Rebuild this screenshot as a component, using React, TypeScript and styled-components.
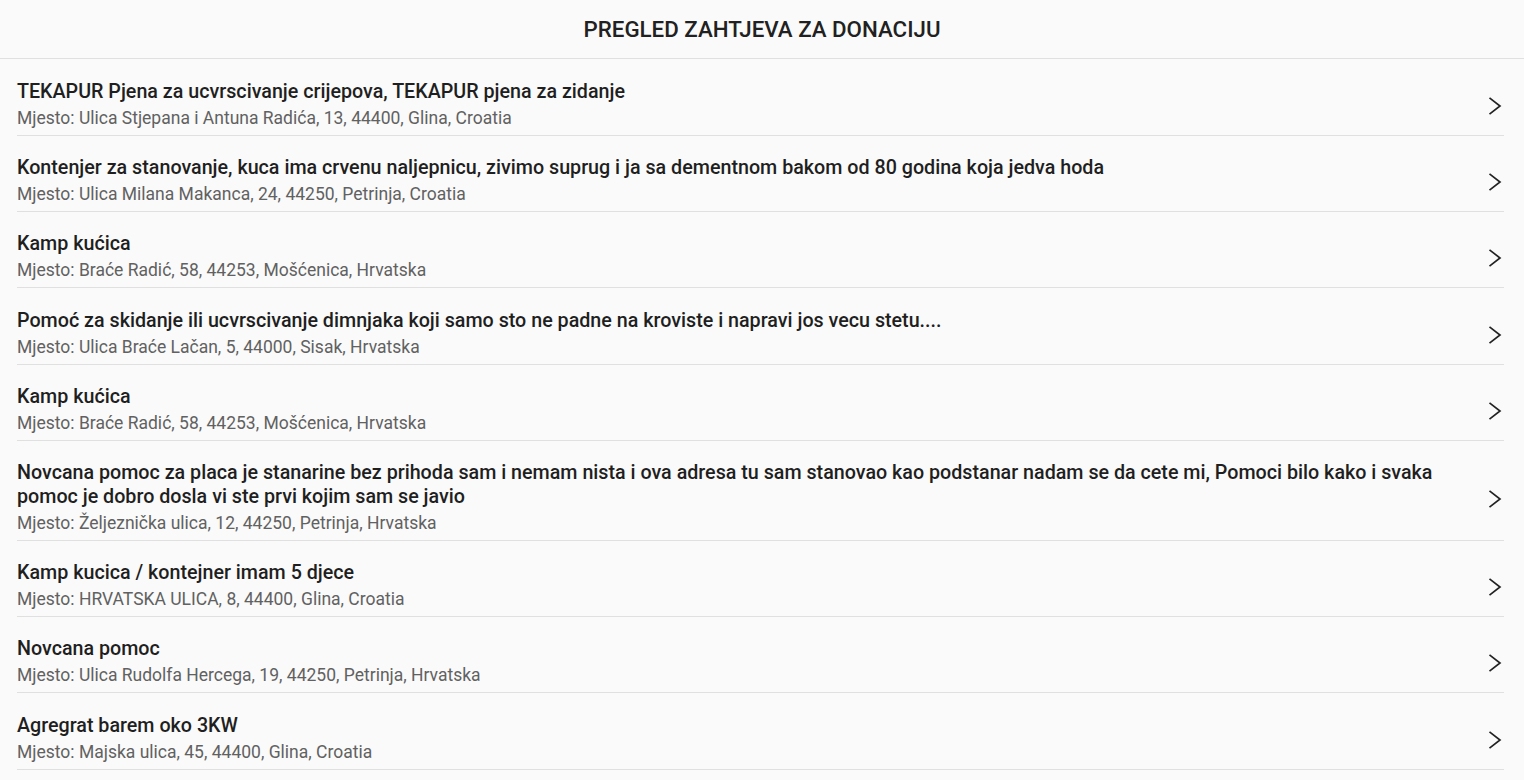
import React from "react";
import styled, { createGlobalStyle } from "styled-components";

const Global = createGlobalStyle`
  html, body { margin: 0; padding: 0; background: #fafafa; }
  body { font-family: Roboto, "Noto Sans", sans-serif; color: #212121; }
`;

const Page = styled.div`
  width: 1524px;
  min-height: 780px;
  background: #fafafa;
`;

const Header = styled.header`
  height: 58px;
  border-bottom: 1px solid #e0e0e0;
  display: flex;
  align-items: center;
  justify-content: center;
`;

const HeaderTitle = styled.h1`
  margin: 0;
  font-size: 22.3px;
  font-weight: 500;
  color: #212121;
  letter-spacing: 0;
`;

const List = styled.ul`
  list-style: none;
  margin: 0;
  padding: 0 20px 0 17px;
`;

const Row = styled.li`
  display: flex;
  align-items: center;
  border-bottom: 1px solid #e0e0e0;
  padding: 21px 0 7px;
  margin-top: -0.8px;
  &:first-child { margin-top: 0; }
  cursor: pointer;
`;

const Texts = styled.div`
  flex: 1;
  min-width: 0;
  padding-right: 40px;
`;

const Title = styled.div`
  font-size: 19.7px;
  line-height: 24px;
  font-weight: 500;
  color: #1f1f1f;
`;

const Sub = styled.div`
  margin-top: 4px;
  font-size: 17.5px;
  line-height: 20px;
  color: #616161;
`;

const Chevron = styled.svg`
  flex: none;
  width: 14px;
  height: 18px;
  margin: 4px 2px 0 0;
`;

const items: [string, string][] = [
  ["TEKAPUR Pjena za ucvrscivanje crijepova, TEKAPUR pjena za zidanje", "Ulica Stjepana i Antuna Radića, 13, 44400, Glina, Croatia"],
  ["Kontenjer za stanovanje, kuca ima crvenu naljepnicu, zivimo suprug i ja sa dementnom bakom od 80 godina koja jedva hoda", "Ulica Milana Makanca, 24, 44250, Petrinja, Croatia"],
  ["Kamp kućica", "Braće Radić, 58, 44253, Mošćenica, Hrvatska"],
  ["Pomoć za skidanje ili ucvrscivanje dimnjaka koji samo sto ne padne na kroviste i napravi jos vecu stetu....", "Ulica Braće Lačan, 5, 44000, Sisak, Hrvatska"],
  ["Kamp kućica", "Braće Radić, 58, 44253, Mošćenica, Hrvatska"],
  ["Novcana pomoc za placa je stanarine bez prihoda sam i nemam nista i ova adresa tu sam stanovao kao podstanar nadam se da cete mi, Pomoci bilo kako i svaka pomoc je dobro dosla vi ste prvi kojim sam se javio", "Željeznička ulica, 12, 44250, Petrinja, Hrvatska"],
  ["Kamp kucica / kontejner imam 5 djece", "HRVATSKA ULICA, 8, 44400, Glina, Croatia"],
  ["Novcana pomoc", "Ulica Rudolfa Hercega, 19, 44250, Petrinja, Hrvatska"],
  ["Agregrat barem oko 3KW", "Majska ulica, 45, 44400, Glina, Croatia"],
];

export default function App() {
  return (
    <Page>
      <Global />
      <Header>
        <HeaderTitle>PREGLED ZAHTJEVA ZA DONACIJU</HeaderTitle>
      </Header>
      <List>
        {items.map(([t, p], i) => (
          <Row key={i}>
            <Texts>
              <Title>{t}</Title>
              <Sub>Mjesto: {p}</Sub>
            </Texts>
            <Chevron viewBox="0 0 14 18" fill="none">
              <path d="M1.5 0.8 L12 9 L1.5 17.2" stroke="#222" strokeWidth="1.7" />
            </Chevron>
          </Row>
        ))}
      </List>
    </Page>
  );
}
